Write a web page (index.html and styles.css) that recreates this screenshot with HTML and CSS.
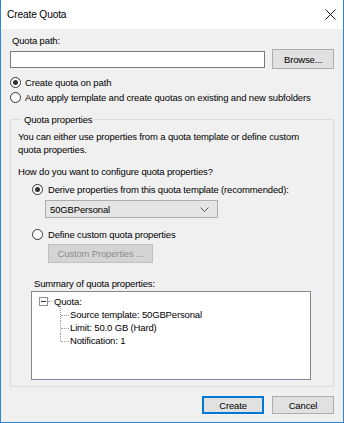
FILE: index.html
```html
<!DOCTYPE html>
<html lang="en">

<head>
    <meta charset="UTF-8">
    <title>Create Quota</title>
    <link rel="stylesheet" href="styles.css">
</head>

<body>
    <div class="window">
        <div class="titlebar">
            <span class="title">Create Quota</span>
            <svg class="close" width="11" height="11" viewBox="0 0 11 11">
                <path d="M0.5 0.5 L10.5 10.5 M10.5 0.5 L0.5 10.5" stroke="#111" stroke-width="1" fill="none"/>
            </svg>
        </div>

        <div class="content">
            <div class="path-label">Quota path:</div>
            <div class="path-row">
                <input type="text" class="path-input">
                <button class="btn">Browse...</button>
            </div>

            <label class="radio-row first">
                <span class="radio checked"></span>Create quota on path
            </label>
            <label class="radio-row">
                <span class="radio"></span>Auto apply template and create quotas on existing and new subfolders
            </label>

            <fieldset class="group">
                <legend>Quota properties</legend>
                <p class="intro">You can either use properties from a quota template or define custom quota properties.</p>
                <p class="question">How do you want to configure quota properties?</p>

                <label class="radio-row sub derive">
                    <span class="radio checked"></span>Derive properties from this quota template (recommended):
                </label>
                <div class="combo">
                    <span>50GBPersonal</span>
                    <svg width="9" height="5" viewBox="0 0 9 5">
                        <path d="M0.5 0.5 L4.5 4.5 L8.5 0.5" stroke="#555" stroke-width="1" fill="none"/>
                    </svg>
                </div>

                <label class="radio-row sub define">
                    <span class="radio"></span>Define custom quota properties
                </label>
                <button class="btn custom" disabled>Custom Properties ...</button>

                <div class="summary-label">Summary of quota properties:</div>
                <div class="tree">
                    <div class="tree-root"><span class="toggle"></span><span class="dash"></span>Quota:</div>
                    <ul class="tree-children">
                        <li>Source template: 50GBPersonal</li>
                        <li>Limit: 50.0 GB (Hard)</li>
                        <li>Notification: 1</li>
                    </ul>
                </div>
            </fieldset>

            <div class="actions">
                <button class="btn default">Create</button>
                <button class="btn">Cancel</button>
            </div>
        </div>
    </div>
</body>

</html>
```

FILE: styles.css
```css
body {
    margin: 0;
    font-family: "Liberation Sans", Arial, sans-serif;
    font-size: 9.5px;
    letter-spacing: -0.15px;
    color: #000;
    background: #fff;
}

.window {
    width: 344px;
    height: 423px;
    box-sizing: border-box;
    border: 1px solid #2b88d8;
    border-top: none;
    background-color: #f0f0f0;
    display: flex;
    flex-direction: column;
}

.titlebar {
    height: 29px;
    flex-shrink: 0;
    background-color: #fff;
    display: flex;
    align-items: center;
    justify-content: space-between;
    padding: 0 7px 0 6px;
}

.title {
    font-size: 10.2px;
}

.content {
    padding: 4px 9px 0 9px;
    display: flex;
    flex-direction: column;
}

.path-label {
    line-height: 15px;
    padding-left: 2px;
}

.path-row {
    margin-top: 1px;
    height: 20px;
    display: flex;
    align-items: center;
    gap: 7px;
}

.path-input {
    width: 256px;
    height: 17px;
    box-sizing: border-box;
    margin: 0;
    border: 1px solid #7a7a7a;
    background: #fff;
}

.btn {
    width: 62px;
    height: 20px;
    box-sizing: border-box;
    margin: 0;
    padding: 0;
    font-family: inherit;
    font-size: 9.5px;
    letter-spacing: -0.15px;
    color: #000;
    background-color: #e1e1e1;
    border: 1px solid #adadad;
}

.radio-row {
    display: flex;
    align-items: center;
    gap: 4px;
    line-height: 15px;
    white-space: nowrap;
}

.radio-row.first {
    margin-top: 6px;
}

.radio {
    width: 11px;
    height: 11px;
    box-sizing: border-box;
    border: 1px solid #333;
    border-radius: 50%;
    background: #fff;
    display: flex;
    align-items: center;
    justify-content: center;
}

.radio.checked::after {
    content: '';
    width: 5px;
    height: 5px;
    border-radius: 50%;
    background: #333;
}

.group {
    margin: 7px 0 0 0;
    padding: 0 8px 6px 7px;
    border: 1px solid #dcdcdc;
    display: flex;
    flex-direction: column;
    align-items: flex-start;
}

.group legend {
    margin-left: 4px;
    padding: 0 2px;
    line-height: 15px;
}

.intro {
    margin: 3px 0 0 0;
    line-height: 13px;
    width: 300px;
}

.question {
    margin: 8px 0 0 0;
    line-height: 15px;
}

.radio-row.sub {
    margin-left: 14px;
    gap: 5px;
}

.radio-row.derive {
    margin-top: 3px;
}

.radio-row.define {
    margin-top: 9px;
}

.combo {
    margin: 3px 0 0 27px;
    width: 173px;
    height: 18px;
    box-sizing: border-box;
    border: 1px solid #adadad;
    background-color: #e5e5e5;
    display: flex;
    align-items: center;
    justify-content: space-between;
    padding: 0 8px 0 4px;
}

.custom {
    margin: 2px 0 0 30px;
    width: 105px;
    height: 19px;
    color: #8d8d8d;
    background-color: #d4d4d4;
    border-color: #bfbfbf;
}

.summary-label {
    margin: 13px 0 0 16px;
    line-height: 15px;
}

.tree {
    margin-left: 13px;
    width: 280px;
    height: 89px;
    box-sizing: border-box;
    border: 1px solid #828790;
    background: #fff;
    padding-top: 3px;
}

.tree-root {
    display: flex;
    align-items: center;
    line-height: 13px;
    padding-left: 7px;
}

.toggle {
    width: 9px;
    height: 9px;
    box-sizing: border-box;
    border: 1px solid #919191;
    display: flex;
    align-items: center;
    justify-content: center;
}

.toggle::after {
    content: '';
    width: 5px;
    height: 1px;
    background: #333;
}

.dash {
    width: 4px;
    margin-right: 2px;
    border-top: 1px dotted #a0a0a0;
}

.tree-children {
    list-style: none;
    margin: 0 0 0 28px;
    padding: 0;
}

.tree-children li {
    position: relative;
    line-height: 13px;
    padding-left: 10px;
}

.tree-children li::before {
    content: '';
    position: absolute;
    left: 0;
    top: 0;
    height: 100%;
    border-left: 1px dotted #a0a0a0;
}

.tree-children li:first-child::before {
    top: -5px;
    height: calc(100% + 5px);
}

.tree-children li:last-child::before {
    height: 7px;
}

.tree-children li::after {
    content: '';
    position: absolute;
    left: 1px;
    top: 7px;
    width: 8px;
    border-top: 1px dotted #a0a0a0;
}

.actions {
    margin-top: 9px;
    display: flex;
    justify-content: flex-end;
    gap: 8px;
}

.actions .btn {
    height: 18px;
}

.btn.default {
    border-color: #0078d7;
    box-shadow: inset 0 0 0 1px #0078d7;
}
```
